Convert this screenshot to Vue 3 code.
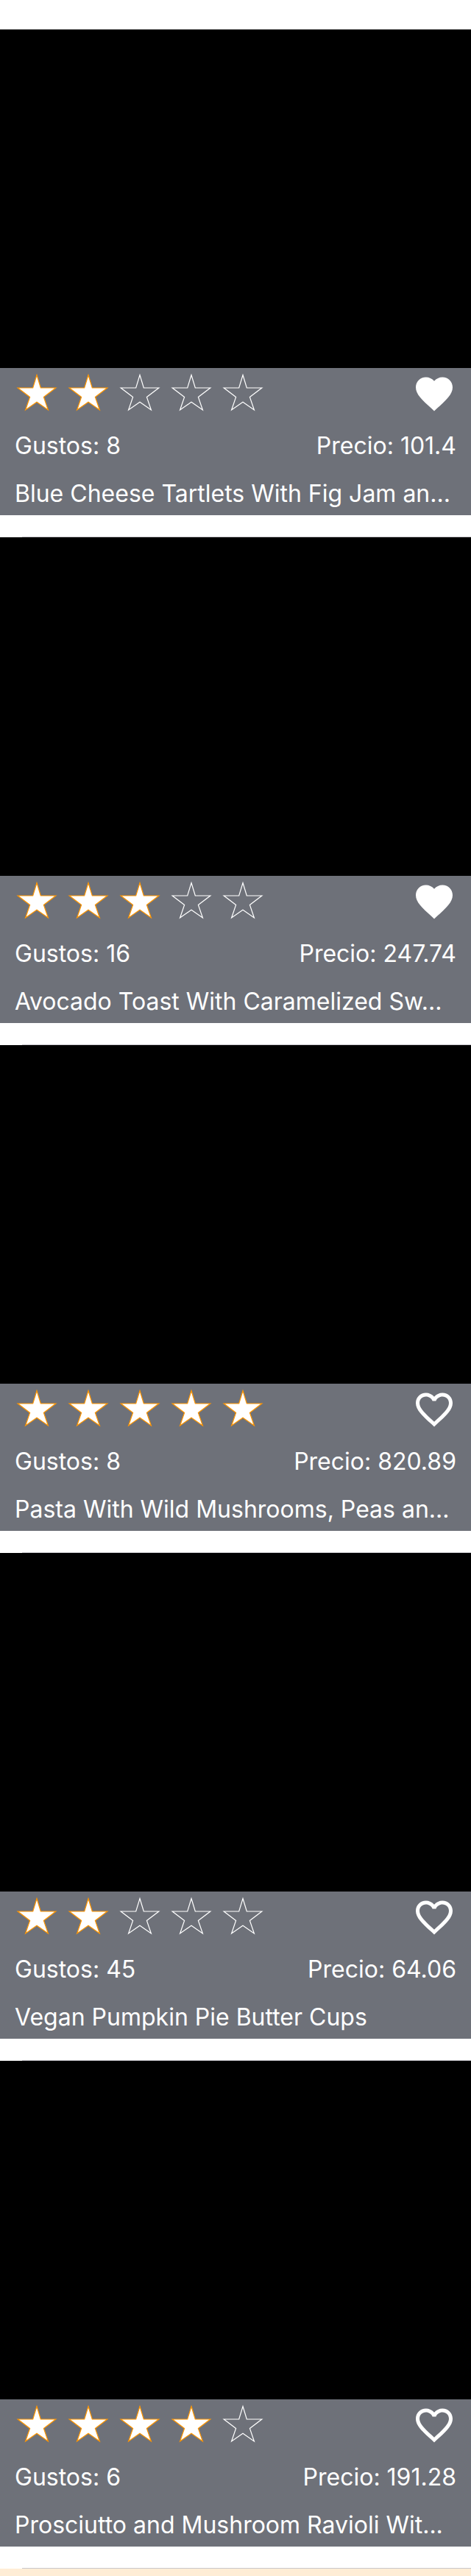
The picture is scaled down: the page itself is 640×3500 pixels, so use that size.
<script setup>
import { ref } from 'vue'

const recipes = ref([
  { title: 'Blue Cheese Tartlets With Fig Jam an...', likes: 8, price: '101.4', rating: 2, favorite: true },
  { title: 'Avocado Toast With Caramelized Sw...', likes: 16, price: '247.74', rating: 3, favorite: true },
  { title: 'Pasta With Wild Mushrooms, Peas an...', likes: 8, price: '820.89', rating: 5, favorite: false },
  { title: 'Vegan Pumpkin Pie Butter Cups', likes: 45, price: '64.06', rating: 2, favorite: false },
  { title: 'Prosciutto and Mushroom Ravioli Wit...', likes: 6, price: '191.28', rating: 4, favorite: false },
])

const heartFull =
  'M12 21.35l-1.45-1.32C5.4 15.36 2 12.28 2 8.5 2 5.42 4.42 3 7.5 3c1.74 0 3.41.81 4.5 2.09C13.09 3.81 14.76 3 16.5 3 19.58 3 22 5.42 22 8.5c0 3.78-3.4 6.86-8.55 11.54L12 21.35z'
const heartBorder =
  'M16.5 3c-1.74 0-3.41.81-4.5 2.09C10.91 3.81 9.24 3 7.5 3 4.42 3 2 5.42 2 8.5c0 3.78 3.4 6.86 8.55 11.54L12 21.35l1.45-1.32C18.6 15.36 22 12.28 22 8.5 22 5.42 19.58 3 16.5 3zm-4.4 15.55l-.1.1-.1-.1C7.14 14.24 4 11.39 4 8.5 4 6.5 5.5 5 7.5 5c1.54 0 3.04.99 3.57 2.36h1.87C13.46 5.99 14.96 5 16.5 5c2 0 3.5 1.5 3.5 3.5 0 2.89-3.14 5.74-7.9 10.05z'
</script>

<template>
  <main class="feed">
    <ul class="list">
      <li v-for="recipe in recipes" :key="recipe.title" class="item">
        <article>
          <div class="photo"></div>
          <div class="panel">
            <div class="row">
              <div class="stars" role="img" :aria-label="`${recipe.rating} / 5`">
                <svg
                  v-for="n in 5"
                  :key="n"
                  class="star"
                  :class="{ filled: n <= recipe.rating }"
                  viewBox="0 0 60 60"
                >
                  <path d="M30 4.5L35.3 22H55.8L39.4 34.4L45.4 52L30 41.3L14.6 52L20.6 34.4L4.2 22H24.7Z" />
                </svg>
              </div>
              <button
                class="heart"
                type="button"
                aria-label="Favorito"
                :aria-pressed="recipe.favorite"
                @click="recipe.favorite = !recipe.favorite"
              >
                <svg viewBox="0 0 24 24"><path :d="recipe.favorite ? heartFull : heartBorder" /></svg>
              </button>
            </div>
            <div class="row details">
              <span>Gustos: {{ recipe.likes }}</span>
              <span>Precio: {{ recipe.price }}</span>
            </div>
            <h2 class="title">{{ recipe.title }}</h2>
          </div>
        </article>
      </li>
    </ul>
    <div class="next"></div>
  </main>
</template>

<style>
body {
  margin: 0;
  background: #fff;
}
</style>

<style scoped>
.feed {
  padding-top: 40px;
  color: #fff;
  font-family: Inter, "Liberation Sans", sans-serif;
  font-size: 32px;
  line-height: 40px;
}
.list {
  margin: 0;
  padding: 0;
  list-style: none;
}
.item::after {
  content: "";
  display: block;
  height: 1px;
  margin: 29px 0 0 30px;
  background: #c8c7cc;
}
.photo {
  height: 460px;
  background: #000;
}
.panel {
  display: flex;
  flex-direction: column;
  padding: 5px 20px 9px;
  background: #6e7179;
}
.row {
  display: flex;
  justify-content: space-between;
  align-items: center;
}
.stars {
  display: flex;
  gap: 10px;
}
.star {
  display: block;
  width: 60px;
  height: 60px;
  fill: none;
  stroke: #fff;
  stroke-width: 1.2;
}
.star.filled {
  fill: #fff;
  stroke: #ff9500;
}
.heart {
  width: 60px;
  height: 60px;
  padding: 0;
  border: 0;
  background: none;
  cursor: pointer;
}
.heart svg {
  display: block;
  width: 60px;
  height: 60px;
  fill: #fff;
}
.details {
  margin-top: 21px;
}
.title {
  margin: 25px 0 0;
  font-size: 32px;
  font-weight: 400;
  overflow: hidden;
  white-space: nowrap;
  text-overflow: ellipsis;
}
.next {
  height: 10px;
  background: #ffedd6;
}
</style>
